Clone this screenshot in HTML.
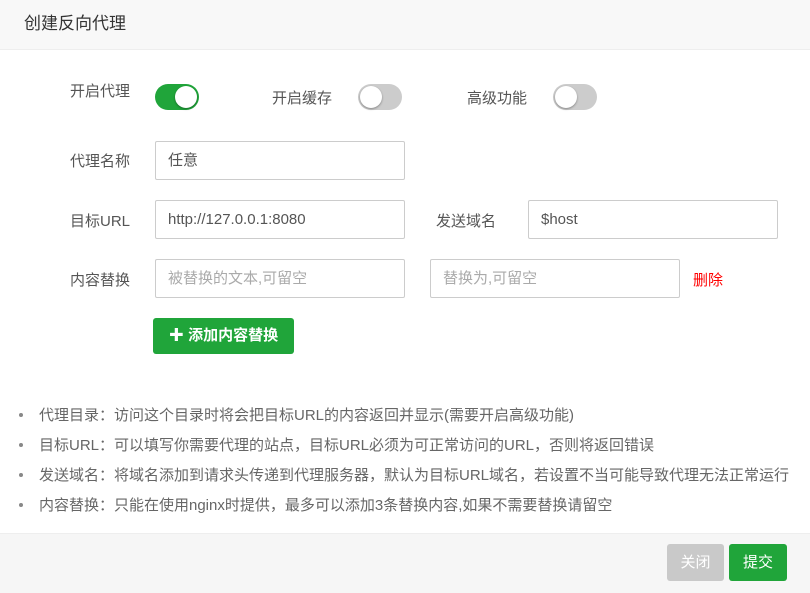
<!DOCTYPE html>
<html><head><meta charset="utf-8"><style>
*{margin:0;padding:0;box-sizing:border-box}
body{width:810px;height:593px;position:relative;background:#fff;font-family:"Liberation Sans","Noto Sans CJK SC",sans-serif;font-size:15px;color:#555;overflow:hidden}
.a{position:absolute}
.hd{left:0;top:0;width:810px;height:50px;background:#f8f8f8;border-bottom:1px solid #eee;font-size:17px;color:#333;line-height:48px;padding-left:24px}
.lb{width:130px;text-align:right;color:#555}
.in{height:39px;border:1px solid #ccc;border-radius:2px;line-height:37px;padding-left:12px;color:#555}
.ph{color:#aaa}
.sw{width:44px;height:26px;border-radius:13px;background:#ccc}
.sw i{position:absolute;top:2px;left:2px;width:22px;height:22px;border-radius:50%;background:#fff;box-shadow:0 1px 2px rgba(0,0,0,.35)}
.sw.on{background:#20a53a}.sw.on i{left:20px}
ul{list-style:none}
li{position:absolute;left:21px;color:#666}
li:before{content:"";position:absolute;left:-2px;top:9px;width:4px;height:4px;border-radius:50%;background:#888}
li span{position:absolute;left:18px;white-space:nowrap}
.ft{left:0;top:533px;width:810px;height:60px;background:#f6f6f6;border-top:1px solid #eee}
.bt{height:37px;border-radius:3px;color:#fff;text-align:center;line-height:37px;font-size:15px}
</style></head><body>
<div class="a hd">创建反向代理</div>
<div class="a lb" style="left:0;top:80px">开启代理</div>
<div class="a sw on" style="left:155px;top:84px"><i></i></div>
<div class="a" style="left:272px;top:87px">开启缓存</div>
<div class="a sw" style="left:358px;top:84px"><i></i></div>
<div class="a" style="left:467px;top:87px">高级功能</div>
<div class="a sw" style="left:553px;top:84px"><i></i></div>

<div class="a lb" style="left:0;top:150px">代理名称</div>
<div class="a in" style="left:155px;top:141px;width:250px">任意</div>
<div class="a lb" style="left:0;top:210px">目标URL</div>
<div class="a in" style="left:155px;top:200px;width:250px">http://127.0.0.1:8080</div>
<div class="a" style="left:436px;top:210px">发送域名</div>
<div class="a in" style="left:528px;top:200px;width:250px">$host</div>
<div class="a lb" style="left:0;top:269px">内容替换</div>
<div class="a in ph" style="left:155px;top:259px;width:250px">被替换的文本,可留空</div>
<div class="a in ph" style="left:430px;top:259px;width:250px">替换为,可留空</div>
<div class="a" style="left:693px;top:269px;color:#f00">删除</div>
<div class="a bt" style="left:153px;top:318px;width:141px;height:36px;line-height:36px;background:#20a53a;border-radius:3px;font-weight:bold"><span style="font-size:15px">✚</span> 添加内容替换</div>

<ul>
<li style="top:404px"><span>代理目录：访问这个目录时将会把目标URL的内容返回并显示(需要开启高级功能)</span></li>
<li style="top:434px"><span>目标URL：可以填写你需要代理的站点，目标URL必须为可正常访问的URL，否则将返回错误</span></li>
<li style="top:464px"><span>发送域名：将域名添加到请求头传递到代理服务器，默认为目标URL域名，若设置不当可能导致代理无法正常运行</span></li>
<li style="top:494px"><span>内容替换：只能在使用nginx时提供，最多可以添加3条替换内容,如果不需要替换请留空</span></li>
</ul>
<div class="a ft"></div>
<div class="a bt" style="left:667px;top:544px;width:57px;background:#c9c9c9">关闭</div>
<div class="a bt" style="left:729px;top:544px;width:58px;background:#20a53a">提交</div>
</body></html>
